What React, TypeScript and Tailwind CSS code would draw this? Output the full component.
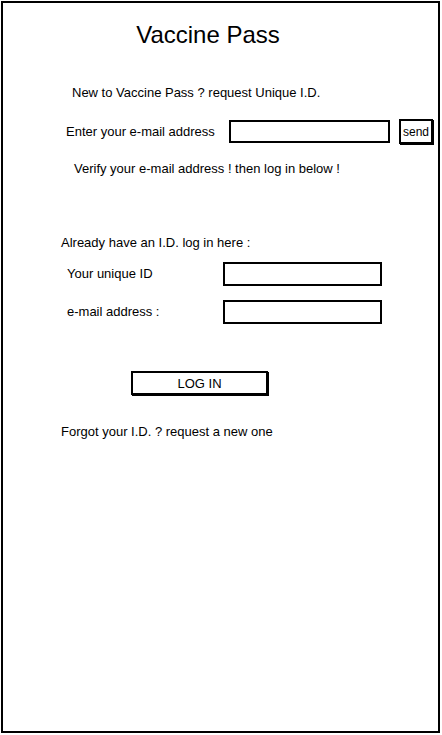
import React from "react";

function App() {
  return (
    <div className="w-[442px] h-[735px] bg-white font-['Liberation_Sans',sans-serif] text-[13px] text-black">
      <div className="ml-[1px] mt-[1px] w-[439px] h-[732px] border-2 border-black flex flex-col">
        <h1 className="mt-[18px] pr-[25px] text-center text-[24px] leading-[28px]">
          Vaccine Pass
        </h1>

        <p className="mt-[36px] pl-[69px] leading-[16px]">
          New to Vaccine Pass ? request Unique I.D.
        </p>

        <div className="mt-[18px] flex items-center">
          <span className="pl-[63px] w-[226px]">Enter your e-mail address</span>
          <div className="w-[161px] h-[23px] border-2 border-black bg-white" />
          <button className="ml-[9px] w-[34px] h-[25px] border-2 border-black shadow-[1px_1px_0_#000] text-[12px] leading-none">
            send
          </button>
        </div>

        <p className="mt-[17px] pl-[71px] leading-[16px]">
          Verify your e-mail address ! then log in below !
        </p>

        <p className="mt-[58px] pl-[58px] leading-[16px]">
          Already have an I.D. log in here :
        </p>

        <div className="mt-[11px] flex items-center">
          <span className="pl-[64px] w-[220px]">Your unique ID</span>
          <div className="w-[159px] h-[24px] border-2 border-black bg-white" />
        </div>

        <div className="mt-[14px] flex items-center">
          <span className="pl-[64px] w-[220px]">e-mail address :</span>
          <div className="w-[159px] h-[24px] border-2 border-black bg-white" />
        </div>

        <div className="mt-[47px] pl-[128px]">
          <button className="w-[137px] h-[24px] border-2 border-black shadow-[1px_1px_0_#000] text-[13px] leading-none">
            LOG IN
          </button>
        </div>

        <p className="mt-[29px] pl-[58px] leading-[16px]">
          Forgot your I.D. ? request a new one
        </p>
      </div>
    </div>
  );
}

export default App;
